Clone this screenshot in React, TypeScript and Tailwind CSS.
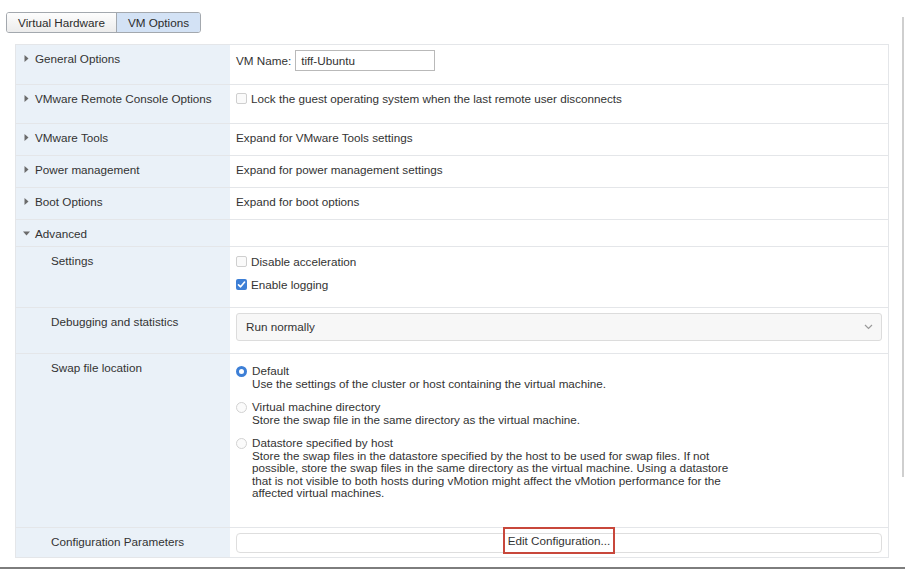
import React from "react";

const Tri = ({ open }: { open?: boolean }) =>
  open ? (
    <svg width="7" height="5" viewBox="0 0 7 5" className="shrink-0">
      <path d="M0 0.5 L7 0.5 L3.5 4.5 Z" fill="#6b6b6b" />
    </svg>
  ) : (
    <svg width="5" height="7" viewBox="0 0 5 7" className="shrink-0">
      <path d="M0.5 0 L4.5 3.5 L0.5 7 Z" fill="#6b6b6b" />
    </svg>
  );

const Check = ({ checked }: { checked?: boolean }) =>
  checked ? (
    <span className="w-[11px] h-[11px] rounded-[2px] bg-[#3d7fd6] flex items-center justify-center shrink-0">
      <svg width="9" height="9" viewBox="0 0 9 9">
        <path d="M1.5 4.8 L3.6 6.8 L7.6 2" stroke="white" strokeWidth="1.6" fill="none" strokeLinecap="round" strokeLinejoin="round" />
      </svg>
    </span>
  ) : (
    <span className="block w-[11px] h-[11px] rounded-[2px] border border-[#cfcfcf] bg-[#fafafa] shrink-0" />
  );

const Radio = ({ checked }: { checked?: boolean }) =>
  checked ? (
    <span className="block w-[11px] h-[11px] rounded-full border-[3px] border-[#3d7fd6] bg-white shrink-0" />
  ) : (
    <span className="block w-[11px] h-[11px] rounded-full border border-[#d2d2d2] bg-[#fbfbfb] shrink-0" />
  );

function Row({
  h,
  label,
  sub,
  open,
  last,
  children,
}: {
  h: string;
  label: string;
  sub?: boolean;
  open?: boolean;
  last?: boolean;
  children?: React.ReactNode;
}) {
  return (
    <div className={`flex ${h} ${last ? "" : "border-b border-[#e4e6e9]"}`}>
      <div className="w-[214px] shrink-0 bg-[#eaf1f8] pt-[6px] leading-[15px]">
        {sub ? (
          <div className="pl-[35px]">{label}</div>
        ) : (
          <div className="flex items-center pl-[6px] gap-[5px]">
            <span className="w-[8px] flex justify-center">
              <Tri open={open} />
            </span>
            <span>{label}</span>
          </div>
        )}
      </div>
      <div className="flex-1 min-w-0 bg-white px-[6px]">{children}</div>
    </div>
  );
}

export default function App() {
  return (
    <div className="w-[905px] h-[569px] relative bg-white overflow-hidden font-['Liberation_Sans',Arial,sans-serif] text-[11.7px] text-[#333]">
      <div className="pt-[12px] pl-[6px]">
        <div className="flex w-[195px] h-[21px] border border-[#a3a8ae] rounded-[3px] overflow-hidden text-[11.7px] text-[#2b2b2b]">
          <div className="w-[110px] flex items-center justify-center bg-gradient-to-b from-[#fdfdfd] to-[#ececec] border-r border-[#a3a8ae]">
            Virtual Hardware
          </div>
          <div className="flex-1 flex items-center justify-center bg-[#d3e2f5]">VM Options</div>
        </div>
      </div>

      <div className="ml-[15px] mt-[11px] w-[874px] border border-[#e4e6e9]">
        <Row h="h-[40px]" label="General Options">
          <div className="flex items-center gap-[4px] pt-[5px]">
            <span>VM Name:</span>
            <div className="w-[140px] h-[21px] border border-[#b9b9b9] flex items-center pl-[5px]">tiff-Ubuntu</div>
          </div>
        </Row>
        <Row h="h-[39px]" label="VMware Remote Console Options">
          <div className="flex items-center gap-[4px] pt-[6px] leading-[15px]">
            <Check />
            <span>Lock the guest operating system when the last remote user disconnects</span>
          </div>
        </Row>
        <Row h="h-[32px]" label="VMware Tools">
          <div className="pt-[6px] leading-[15px]">Expand for VMware Tools settings</div>
        </Row>
        <Row h="h-[32px]" label="Power management">
          <div className="pt-[6px] leading-[15px]">Expand for power management settings</div>
        </Row>
        <Row h="h-[32px]" label="Boot Options">
          <div className="pt-[6px] leading-[15px]">Expand for boot options</div>
        </Row>
        <Row h="h-[27px]" label="Advanced" open />
        <Row h="h-[61px]" label="Settings" sub>
          <div className="flex flex-col gap-[8px] pt-[7px] leading-[15px]">
            <div className="flex items-center gap-[4px]">
              <Check />
              <span>Disable acceleration</span>
            </div>
            <div className="flex items-center gap-[4px]">
              <Check checked />
              <span>Enable logging</span>
            </div>
          </div>
        </Row>
        <Row h="h-[46px]" label="Debugging and statistics" sub>
          <div className="pt-[5px]">
            <div className="h-[28px] rounded-[3px] border border-[#dcdcdc] bg-[#f7f7f7] flex items-center justify-between pl-[9px] pr-[8px]">
              <span>Run normally</span>
              <svg width="9" height="6" viewBox="0 0 9 6">
                <path d="M1 1 L4.5 4.5 L8 1" stroke="#9a9a9a" strokeWidth="1.2" fill="none" />
              </svg>
            </div>
          </div>
        </Row>
        <Row h="h-[174px]" label="Swap file location" sub>
          <div className="flex flex-col gap-[11px] pt-[11px] leading-[12.5px]">
            <div className="flex gap-[5px]">
              <span className="mt-[1px]">
                <Radio checked />
              </span>
              <div>
                <div>Default</div>
                <div>Use the settings of the cluster or host containing the virtual machine.</div>
              </div>
            </div>
            <div className="flex gap-[5px]">
              <span className="mt-[1px]">
                <Radio />
              </span>
              <div>
                <div>Virtual machine directory</div>
                <div>Store the swap file in the same directory as the virtual machine.</div>
              </div>
            </div>
            <div className="flex gap-[5px]">
              <span className="mt-[1px]">
                <Radio />
              </span>
              <div>
                <div>Datastore specified by host</div>
                <div className="max-w-[485px]">
                  Store the swap files in the datastore specified by the host to be used for swap files. If not possible, store the swap files in the same directory as the virtual machine. Using a datastore that is not visible to both hosts during vMotion might affect the vMotion performance for the affected virtual machines.
                </div>
              </div>
            </div>
          </div>
        </Row>
        <Row h="h-[29px]" label="Configuration Parameters" sub last>
          <div className="pt-[5px]">
            <div className="h-[20px] rounded-[4px] border border-[#dedede] bg-white flex items-center justify-center">
              <span className="border-2 border-[#c8473b] px-[3px] py-[4px] leading-[15px] -mt-[5px]">
                Edit Configuration...
              </span>
            </div>
          </div>
        </Row>
      </div>

      <div className="mt-[9px] h-[2px] bg-[#7d7d7d]" />

      <div className="absolute left-[902px] top-[17px] w-[2px] h-[460px] bg-[#cfcfcf]" />
    </div>
  );
}
